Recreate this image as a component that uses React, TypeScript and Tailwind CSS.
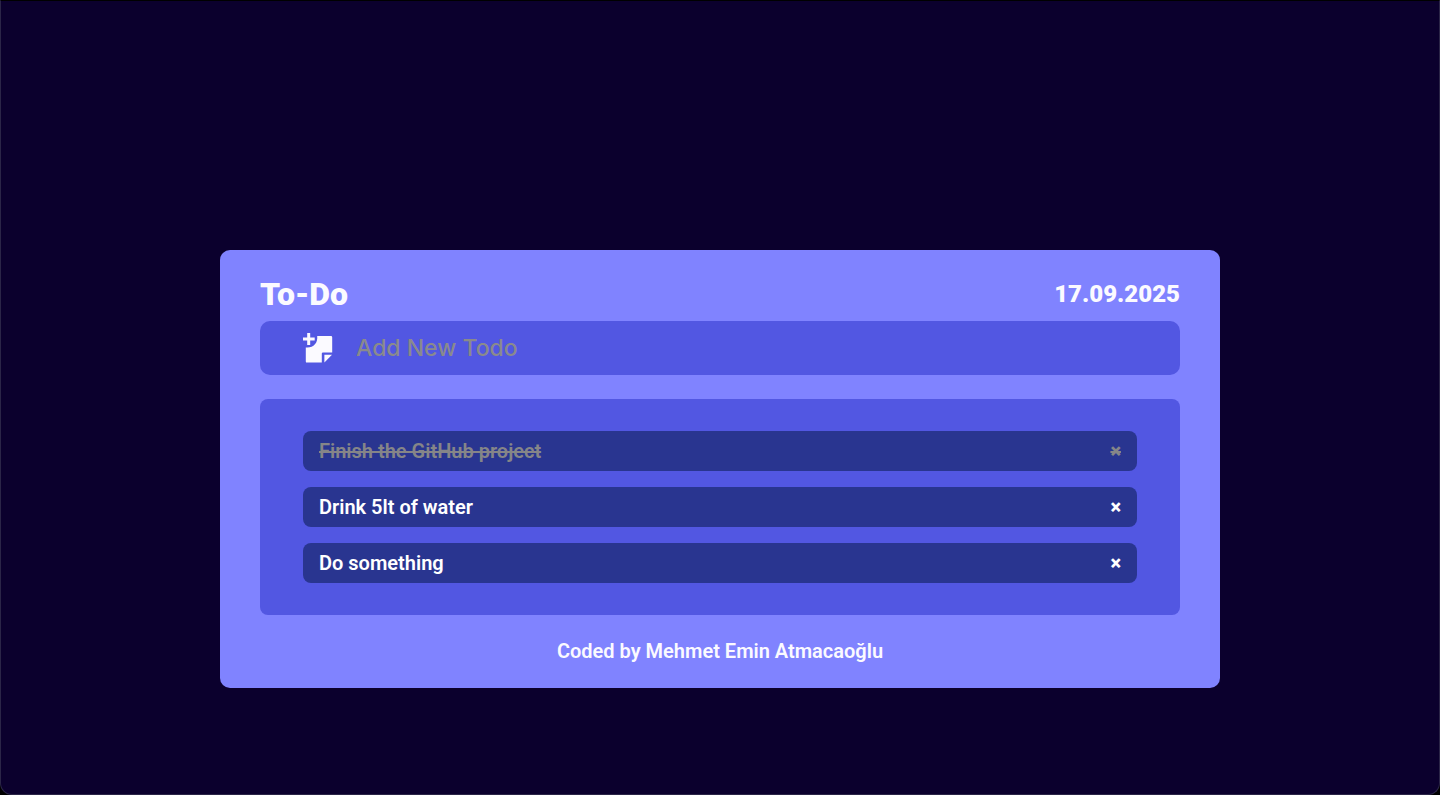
import { useState } from "react";

type Todo = { id: number; text: string; done: boolean };

const initialTodos: Todo[] = [
  { id: 1, text: "Finish the GitHub project", done: true },
  { id: 2, text: "Drink 5lt of water", done: false },
  { id: 3, text: "Do something", done: false },
];

function AddNoteIcon() {
  return (
    <svg viewBox="0 0 32 32" className="size-8 shrink-0" fill="currentColor" aria-hidden="true">
      <path d="M5.200 1h3v4.500h4.500v3H8.200V13H5.200V8.500H1V5.500h4.200z" />
      <path d="M15.200 4H29a1.200 1.200 0 0 1 1.200 1.200V20.400H21a1.200 1.200 0 0 0-1.200 1.200V30.600H5a1.200 1.200 0 0 1-1.200-1.200V15.400C11 16.200 16 11.500 15.200 4z" />
      <path d="M22.400 22.800H30L22.400 30.400z" />
    </svg>
  );
}

export default function App() {
  const [todos, setTodos] = useState<Todo[]>(initialTodos);
  const [draft, setDraft] = useState("");

  function addTodo(event: React.FormEvent) {
    event.preventDefault();
    const text = draft.trim();
    if (!text) return;
    setTodos([...todos, { id: Date.now(), text, done: false }]);
    setDraft("");
  }

  function toggleTodo(id: number) {
    setTodos(todos.map((t) => (t.id === id ? { ...t, done: !t.done } : t)));
  }

  return (
    <div className="bg-black font-['Roboto',sans-serif] text-[#fbfaff]">
      <div className="flex min-h-screen flex-col items-center rounded-b-xl border border-t-black border-[#2b2547] bg-[#0b002d] px-4 pt-[249px] pb-24">
        <main className="w-full max-w-[1000px] rounded-[10px] bg-[#8083ff] px-10 pt-6 pb-[22px]">
          <header className="flex h-10 items-center justify-between">
            <h1 className="text-[32px] leading-10 font-black">To-Do</h1>
            <p className="text-2xl font-black">17.09.2025</p>
          </header>

          <form onSubmit={addTodo} className="mt-[7px] flex h-[54px] items-center gap-[22px] rounded-[10px] bg-[#5257e2] px-[42px]">
            <button type="submit" aria-label="Add todo">
              <AddNoteIcon />
            </button>
            <input
              aria-label="Add New Todo"
              placeholder="Add New Todo"
              value={draft}
              onChange={(e) => setDraft(e.target.value)}
              className="min-w-0 flex-1 bg-transparent font-['Inter',sans-serif] text-[23px] leading-8 font-medium outline-none placeholder:text-[#8a8a8c]"
            />
          </form>

          <ul className="mt-6 flex flex-col gap-4 rounded-lg bg-[#5257e2] px-[43px] py-8">
            {todos.map((todo) => (
              <li
                key={todo.id}
                className={`flex h-10 items-center justify-between rounded-lg bg-[#293590] px-4 text-xl font-semibold ${
                  todo.done ? "text-[#858588]" : "text-white"
                }`}
              >
                <button type="button" onClick={() => toggleTodo(todo.id)} className={todo.done ? "line-through" : ""}>
                  {todo.text}
                </button>
                <button
                  type="button"
                  aria-label={`Delete ${todo.text}`}
                  onClick={() => setTodos(todos.filter((t) => t.id !== todo.id))}
                  className={todo.done ? "font-black line-through" : "font-black"}
                >
                  ×
                </button>
              </li>
            ))}
          </ul>

          <footer className="mt-[21px] text-center text-xl leading-[30px] font-semibold">
            Coded by Mehmet Emin Atmacaoğlu
          </footer>
        </main>
      </div>
    </div>
  );
}
